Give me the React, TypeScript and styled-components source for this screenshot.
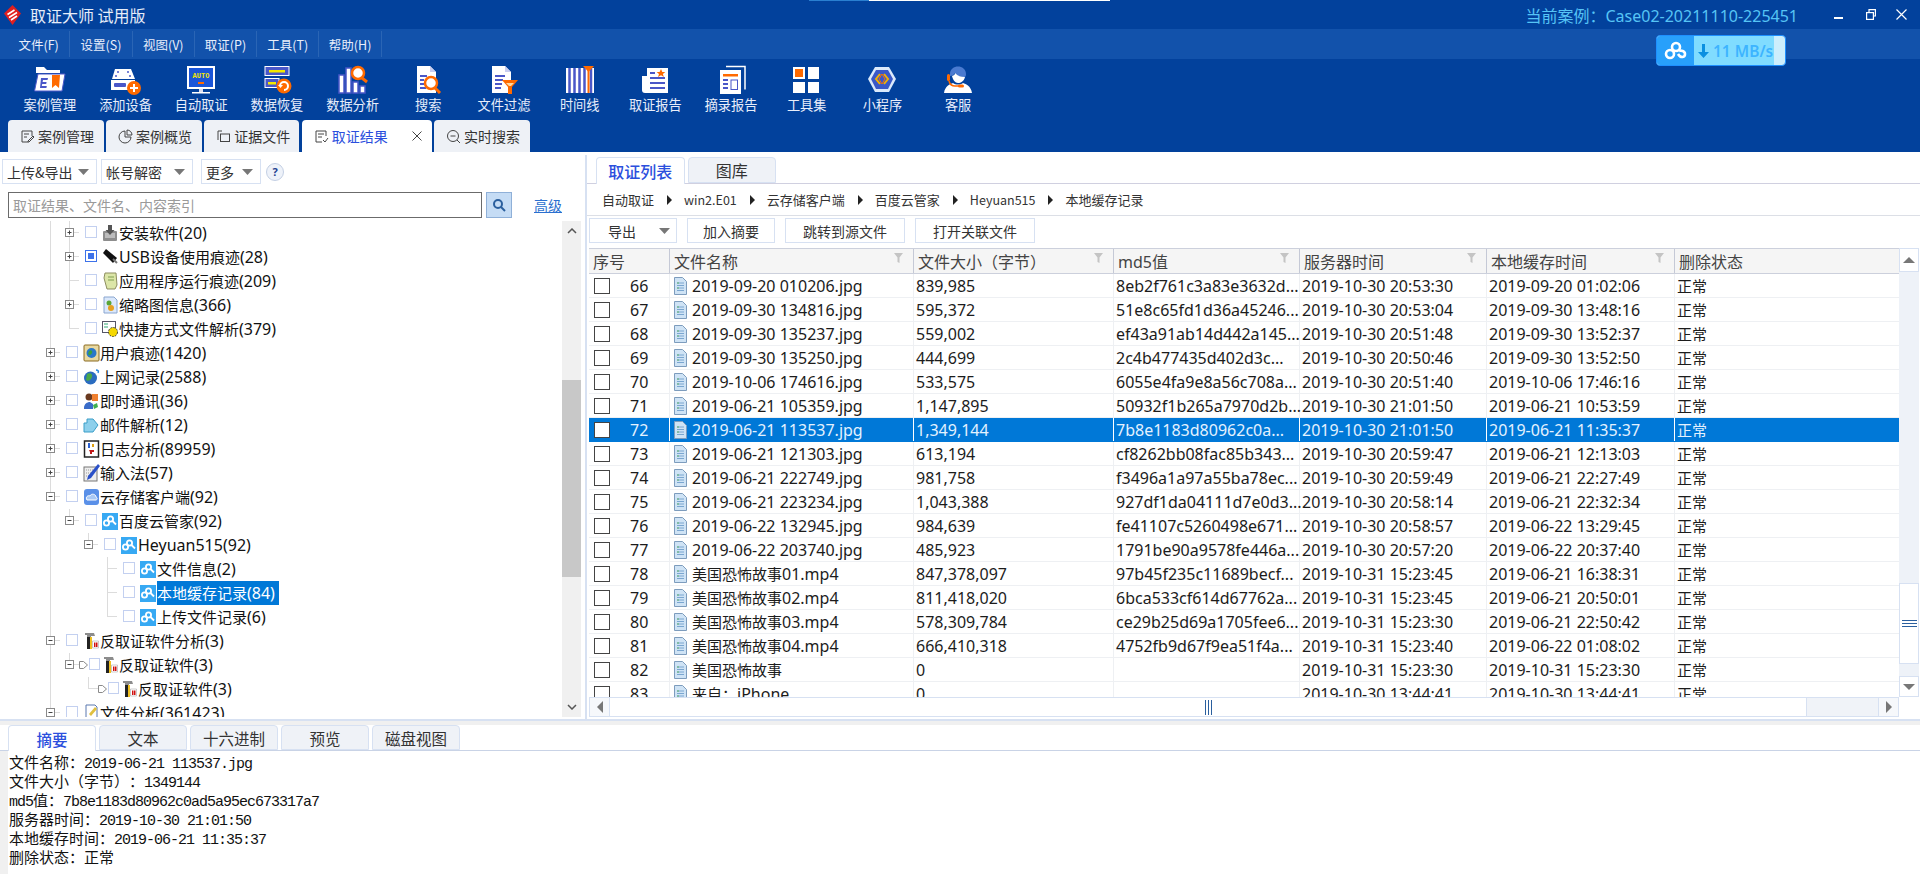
import React from 'react';
import styled, { createGlobalStyle } from 'styled-components';

const FONT = '"Noto Sans", "Noto Sans CJK SC", sans-serif';
const CJK = '"Noto Sans CJK SC", "Noto Sans", sans-serif';
const INDIGO = '#4a57c8';
const ORANGE = '#ff6a00';
const SELECT = '#0078d7';
const PALE = '#d7e1f2';

const Global = createGlobalStyle`
  html, body { margin: 0; padding: 0; background: #fff; }
  body { font-family: ${FONT}; overflow: hidden; text-spacing-trim: space-all; }
  * { box-sizing: border-box; }
`;

const Page = styled.div`
  position: relative;
  width: 1920px;
  height: 874px;
  overflow: hidden;
  display: flex;
  flex-direction: column;
  background: #fff;
`;

/* ---------- header ---------- */
const Header = styled.header`
  background: #02419c;
  flex: none;
`;
const TitleBar = styled.div`
  height: 29px;
  display: flex;
  align-items: center;
  padding-left: 4px;
  color: #e6edf9;
`;
const AppName = styled.span`
  margin-left: 9px;
  font: 16px ${CJK};
  white-space: pre;
`;
const CaseName = styled.span`
  margin-left: auto;
  color: #56c4f5;
  font: 16px ${FONT};
  white-space: pre;
`;
const WindowButtons = styled.div`
  display: flex;
  align-items: center;
  margin-left: 36px;
  margin-right: 13px;
  gap: 20px;
  & > :first-child { margin-right: 3px; }
`;
const TopSliver = styled.div`
  position: absolute;
  left: 809px;
  top: 0;
  width: 301px;
  height: 1px;
  background: linear-gradient(90deg, #2a7fd0 0 60px, #fff 60px);
`;
const MenuBar = styled.nav`
  height: 30px;
  background: #1252ab;
  display: flex;
  align-items: center;
  padding-left: 8px;
`;
const MenuItem = styled.span`
  width: 62.3px;
  height: 26px;
  display: flex;
  align-items: center;
  justify-content: center;
  border-right: 1px solid #2a65b5;
  color: #e8eefb;
  font: 12.5px ${CJK};
`;
const ToolBar = styled.div`
  height: 61px;
  display: flex;
  padding: 5px 0 0 12px;
`;
const ToolItem = styled.div`
  width: 75.7px;
  display: flex;
  flex-direction: column;
  align-items: center;
  color: #e8eefb;
  font: 13.2px/18px ${CJK};
`;
const ToolIcon = styled.div`
  height: 32px;
  display: flex;
  align-items: center;
`;
const TabBar = styled.div`
  height: 32px;
  display: flex;
  gap: 2.4px;
  padding-left: 8px;
`;
const MainTab = styled.div<{ $active?: boolean; $w: number }>`
  width: ${p => p.$w}px;
  display: flex;
  align-items: center;
  padding-left: 12px;
  gap: 3px;
  border-radius: 4px 4px 0 0;
  background: ${p => (p.$active ? '#fff' : '#eef1f6')};
  color: ${p => (p.$active ? '#2b4fdd' : '#333')};
  font: 14px ${CJK};
`;
const TabClose = styled.span`
  margin-left: auto;
  margin-right: 10px;
  display: flex;
`;
const SpeedBadge = styled.div`
  position: absolute;
  left: 1656px;
  top: 35px;
  width: 130px;
  height: 31px;
  display: flex;
  border: 1px solid #1e90ff;
  border-radius: 4px;
  overflow: hidden;
  background: #cdeefc;
`;
const BadgeLogo = styled.div`
  width: 37px;
  background: #28a0fb;
  display: flex;
  align-items: center;
  justify-content: center;
`;
const BadgeSpeed = styled.div`
  width: 80px;
  background: #80dcff;
  display: flex;
  align-items: center;
  padding-left: 4px;
  gap: 4px;
  color: #3db4ff;
  font: 600 15.5px ${FONT};
`;

/* ---------- body ---------- */
const Body = styled.main`
  height: 567px;
  display: flex;
  flex: none;
`;
const LeftPanel = styled.section`
  width: 585px;
  flex: none;
  display: flex;
  flex-direction: column;
  padding-top: 7px;
`;
const ActionRow = styled.div`
  display: flex;
  height: 25px;
  padding-left: 2px;
  align-items: center;
`;
const Select = styled.div<{ $w: number; $gap?: number }>`
  width: ${p => p.$w}px;
  height: 25px;
  margin-right: ${p => p.$gap ?? 0}px;
  padding: 0 7px 0 4px;
  border: 1px solid ${PALE};
  display: flex;
  align-items: center;
  justify-content: space-between;
  color: #333;
  font: 14px ${CJK};
`;
const HelpButton = styled.div`
  width: 18px;
  height: 18px;
  margin-left: 5px;
  border-radius: 50%;
  border: 1px solid #c4d0e4;
  background: #eef2f9;
  display: flex;
  align-items: center;
  justify-content: center;
  color: #23418f;
  font: 700 11px ${FONT};
`;
const SearchRow = styled.div`
  display: flex;
  align-items: center;
  height: 26px;
  margin-top: 8px;
  padding-left: 8px;
`;
const SearchInput = styled.input`
  width: 474px;
  height: 26px;
  padding: 0 4px;
  border: 1px solid #6b6b6b;
  outline: none;
  font: 14px ${CJK};
  &::placeholder { color: #9a9a9a; opacity: 1; }
`;
const SearchButton = styled.div`
  width: 26px;
  height: 26px;
  margin-left: 4px;
  background: #c5dcf5;
  border: 1px solid #8fb0d8;
  display: flex;
  align-items: center;
  justify-content: center;
`;
const AdvancedLink = styled.a`
  margin-left: 22px;
  color: #2b6fcf;
  text-decoration: underline;
  font: 14px ${CJK};
`;
const TreeWrap = styled.div`
  margin-top: 3px;
  height: 496px;
  display: flex;
`;
const Tree = styled.div`
  width: 562px;
  overflow: hidden;
`;
const TreeRow = styled.div`
  height: 24px;
  display: flex;
  align-items: center;
  padding-left: 41px;
`;
const Guide = styled.div<{ $line?: boolean }>`
  width: 19px;
  height: 24px;
  flex: none;
  background: ${p => (p.$line ? 'linear-gradient(#dcdcdc, #dcdcdc) 9px 0 / 1px 100% no-repeat' : 'none')};
`;
const CheckSlot = styled.div<{ $arrow?: boolean }>`
  width: 23px;
  flex: none;
  display: flex;
  align-items: center;
  padding-left: ${p => (p.$arrow ? 0 : 6)}px;
`;
const TreeCheck = styled.div<{ $on?: boolean; $small?: boolean }>`
  width: ${p => (p.$small ? 11 : 12)}px;
  height: 12px;
  margin-top: -2px;
  flex: none;
  border: 1px solid ${p => (p.$on ? '#3d72ea' : '#c3d0f0')};
  background: #fff;
  display: flex;
  align-items: center;
  justify-content: center;
  &::after {
    content: '';
    display: ${p => (p.$on ? 'block' : 'none')};
    width: 6px;
    height: 6px;
    background: #3d72ea;
  }
`;
const TreeIconBox = styled.div`
  width: 17px;
  height: 18px;
  flex: none;
  display: flex;
`;
const TreeLabel = styled.span<{ $selected?: boolean }>`
  height: 24px;
  line-height: 24px;
  padding-right: 4px;
  white-space: nowrap;
  font-size: 16px;
  color: ${p => (p.$selected ? '#fff' : '#111')};
  background: ${p => (p.$selected ? SELECT : 'transparent')};
`;
const Han = styled.span`
  font-size: 15px;
  font-family: ${CJK};
`;
const ScrollTrack = styled.div`
  width: 19px;
  background: #f0f0f0;
  display: flex;
  flex-direction: column;
`;
const ScrollEnd = styled.div`
  height: 20px;
  flex: none;
  display: flex;
  align-items: center;
  justify-content: center;
`;
const ScrollGap = styled.div<{ $h?: number }>`
  ${p => (p.$h ? `height: ${p.$h}px; flex: none;` : 'flex: 1;')}
`;
const ScrollThumb = styled.div`
  height: 197px;
  flex: none;
  background: #c8c8c8;
`;

/* ---------- right panel ---------- */
const RightPanel = styled.section`
  flex: 1;
  margin-top: 3px;
  border-left: 2px solid ${PALE};
  display: flex;
  flex-direction: column;
  min-width: 0;
`;
const RightTabs = styled.div`
  height: 27px;
  margin-top: 2px;
  display: flex;
  gap: 3px;
  padding-left: 9px;
  border-bottom: 1px solid #d0d0e0;
`;
const RightTab = styled.div<{ $active?: boolean }>`
  width: 88.5px;
  height: ${p => (p.$active ? 27 : 26)}px;
  display: flex;
  align-items: center;
  justify-content: center;
  border: 1px solid ${PALE};
  border-bottom: ${p => (p.$active ? 'none' : undefined)};
  border-radius: 4px 4px 0 0;
  background: ${p => (p.$active ? '#fff' : '#eff2f7')};
  color: ${p => (p.$active ? '#2b4fdd' : '#333')};
  font: ${p => (p.$active ? 500 : 400)} 16px ${CJK};
  z-index: 1;
`;
const Breadcrumb = styled.div`
  height: 32px;
  display: flex;
  align-items: center;
  padding-left: 15px;
  border-bottom: 1px solid #dcdfe6;
  color: #333;
  font: 13px ${CJK};
`;
const Crumb = styled.span<{ $latin?: boolean }>`
  white-space: nowrap;
  font-size: ${p => (p.$latin ? 12.5 : 13)}px;
`;
const CrumbArrow = styled.span`
  width: 0;
  height: 0;
  margin: 0 12px 0 13px;
  border-left: 5px solid #222;
  border-top: 5px solid transparent;
  border-bottom: 5px solid transparent;
`;
const ListActions = styled.div`
  height: 32px;
  padding: 2px 0 0 2px;
  display: flex;
  gap: 10px;
`;
const ActionButton = styled.div<{ $w: number }>`
  width: ${p => p.$w}px;
  height: 25px;
  border: 1px solid ${PALE};
  display: flex;
  align-items: center;
  justify-content: center;
  color: #333;
  font: 14px ${CJK};
`;
const ExportButton = styled(ActionButton)`
  justify-content: space-between;
  padding: 0 6px 0 18px;
`;
const TableWrap = styled.div`
  height: 449px;
  margin-left: 2px;
  display: flex;
`;
const TableMain = styled.div`
  width: 1310px;
  overflow: hidden;
`;
const COLS = '81px 244px 200px 186px 187px 188px 224px';
const HeadRow = styled.div`
  height: 26px;
  display: grid;
  grid-template-columns: ${COLS};
  background: #f5f5f5;
  border-top: 1px solid #ccd0dc;
  border-bottom: 1px solid #ccd0dc;
`;
const HeadCell = styled.div`
  display: flex;
  align-items: center;
  justify-content: space-between;
  padding: 0 10px 0 4px;
  border-right: 1px solid #c5c9d6;
  color: #444;
  font-size: 16px;
  &:last-child { border-right: none; }
`;
const HeadFilter = styled.span`
  display: flex;
  margin-top: -6px;
`;
const Row = styled.div<{ $selected?: boolean }>`
  height: 24px;
  display: grid;
  grid-template-columns: ${COLS};
  background: ${p => (p.$selected ? SELECT : '#fff')};
  color: ${p => (p.$selected ? '#e4f2ff' : '#1c1c1c')};
  border-bottom: 1px solid ${p => (p.$selected ? SELECT : '#eef0f3')};
  font-size: 16px;
`;
const Cell = styled.div<{ $selected?: boolean }>`
  display: flex;
  align-items: center;
  padding-left: 2px;
  white-space: nowrap;
  border-right: 1px solid ${p => (p.$selected ? '#fff' : '#eef0f3')};
  &:last-child { border-right: none; }
`;
const IndexCell = styled(Cell)`
  padding-left: 5px;
`;
const NameCell = styled(Cell)`
  padding-left: 4px;
  gap: 5px;
`;
const RowCheck = styled.div`
  width: 16px;
  height: 16px;
  margin-right: 20px;
  flex: none;
  border: 1px solid #444;
  background: #fff;
`;
const VScroll = styled.div`
  width: 20px;
  background: #eef2f8;
  display: flex;
  flex-direction: column;
`;
const VEnd = styled.div<{ $h: number }>`
  height: ${p => p.$h}px;
  flex: none;
  background: #fff;
  border: 1px solid ${PALE};
  display: flex;
  align-items: center;
  justify-content: center;
`;
const VThumb = styled.div`
  height: 81px;
  flex: none;
  background: #fff;
  border: 1px solid ${PALE};
  display: flex;
  align-items: center;
  justify-content: center;
`;
const HScroll = styled.div`
  width: 1310px;
  height: 20px;
  margin-left: 2px;
  display: flex;
  background: #f0f3f8;
  border-top: 1px solid ${PALE};
  border-bottom: 1px solid ${PALE};
`;
const HEnd = styled.div`
  width: 21px;
  flex: none;
  background: #f6f8fb;
  border-left: 1px solid ${PALE};
  border-right: 1px solid ${PALE};
  display: flex;
  align-items: center;
  justify-content: center;
`;
const HThumb = styled.div`
  width: 1197px;
  flex: none;
  background: #fff;
  border-right: 1px solid ${PALE};
  display: flex;
  align-items: center;
  justify-content: center;
`;

/* ---------- bottom ---------- */
const Bottom = styled.section`
  flex: 1;
  display: flex;
  flex-direction: column;
  border-top: 2px solid ${PALE};
  background: #f0f0f0;
`;
const BottomTabs = styled.div`
  margin-top: 4px;
  height: 26px;
  padding-left: 8px;
  display: flex;
  gap: 3px;
  background: #fff;
  border-bottom: 1px solid #c9d3e6;
`;
const BottomTab = styled.div<{ $active?: boolean }>`
  width: 88px;
  height: ${p => (p.$active ? 26 : 25)}px;
  border: 1px solid ${PALE};
  border-bottom: ${p => (p.$active ? 'none' : undefined)};
  border-radius: 4px 4px 0 0;
  background: ${p => (p.$active ? '#fff' : '#eff2f7')};
  color: ${p => (p.$active ? '#2b4fdd' : '#333')};
  display: flex;
  align-items: center;
  justify-content: center;
  font: ${p => (p.$active ? 500 : 400)} 15.5px ${CJK};
`;
const Summary = styled.div`
  flex: 1;
  margin-left: 8px;
  padding: 1px 0 0 1px;
  background: #fff;
`;
const SummaryLine = styled.div`
  height: 19px;
  line-height: 19px;
  white-space: pre;
  color: #111;
`;
const SumCjk = styled.span`
  font: 15px/19px ${CJK};
`;
const SumMono = styled.span`
  font: 15px/19px "Liberation Mono", monospace;
  letter-spacing: -1px;
`;

/* ---------- small drawings ---------- */
const mix = (s: string) =>
  s.split(/([\u3000-\u9fff\uff00-\uffef]+)/).map((p, i) => (i % 2 ? <Han key={i}>{p}</Han> : p));

const Caret = () => (
  <svg width="11" height="6" viewBox="0 0 11 6"><path d="M0 0h11L5.5 6z" fill="#777" /></svg>
);
const Funnel = () => (
  <svg width="9" height="10" viewBox="0 0 9 10"><path d="M0 0h9L5.5 4.5V10L3.5 9V4.5z" fill="#c4c4c4" /></svg>
);
const Connector = ({ up, down, box }: { up?: boolean; down?: boolean; box?: '+' | '-' }) => (
  <svg width="19" height="24" viewBox="0 0 19 24" style={{ flex: 'none' }}>
    {up && <path d="M9.5 0V12" stroke="#dcdcdc" />}
    {down && <path d="M9.5 12V24" stroke="#dcdcdc" />}
    <path d="M9.5 11.5H19" stroke="#dcdcdc" />
    {box && <rect x="5.5" y="7.5" width="8" height="8" fill="#fff" stroke="#8a8a8a" />}
    {box && <path d="M7.5 11.5h4" stroke="#444" />}
    {box === '+' && <path d="M9.5 9.5v4" stroke="#444" />}
  </svg>
);
const Small = ({ children }: { children: React.ReactNode }) => (
  <svg width="17" height="18" viewBox="0 0 17 18">{children}</svg>
);
const FileIcon = () => (
  <svg width="13" height="18" viewBox="0 0 13 18" style={{ flex: 'none' }}>
    <path d="M.5.5h8l4 4v13H.5z" fill="#cfe3f5" stroke="#7d9cbd" />
    <path d="M3 6h7M3 8.5h7M3 11h7M3 13.5h7" stroke="#7aa6d0" />
    <path d="M3 6h2M3 11h2" stroke="#5cb26a" />
  </svg>
);
const BaiduMark = () => (
  <svg width="16" height="18" viewBox="0 0 16 18">
    <rect width="16" height="17" y="1" fill="#37a9f3" />
    <circle cx="4.5" cy="11" r="2.6" fill="none" stroke="#fff" strokeWidth="1.8" />
    <circle cx="8.5" cy="7" r="2.6" fill="none" stroke="#fff" strokeWidth="1.8" />
    <path d="M10.5 9l3.5 3.5" stroke="#fff" strokeWidth="1.8" />
  </svg>
);
const Hammer = () => (
  <Small>
    <path d="M2 1h9l1 3H8v1H4V3H2z" fill="#8c8c8c" />
    <path d="M4 5h3v12H4z" fill="#222" />
    <path d="M7 5h2v12H7z" fill="#f0c020" />
    <path d="M9.500 9h6v7h-6z" fill="#fff" stroke="#999" strokeWidth=".5" />
    <path d="M11 10.500h1.500V15H11zM13 10.500h1.500V15H13z" fill="#d01010" />
  </Small>
);
const treeIcons: Record<string, React.ReactNode> = {
  install: (
    <Small>
      <rect x="1" y="7" width="14" height="10" rx="1" fill="#8d8d8d" />
      <rect x="3" y="9" width="10" height="5" fill="#bcbcbc" />
      <path d="M6 1h4v5h2.5L8 11 3.500 6H6z" fill="#555" />
    </Small>
  ),
  usb: (
    <Small>
      <path d="M4 1l11 9-4 5L1 5z" fill="#111" />
      <path d="M11 11l4 4" stroke="#777" strokeWidth="2" />
    </Small>
  ),
  app: (
    <Small>
      <path d="M3 1h11l1 12-2 4H5L2 6z" fill="#dce6a8" stroke="#8d8d60" />
      <path d="M6 5h6M6 8h6" stroke="#7e9e50" />
    </Small>
  ),
  thumb: (
    <Small>
      <path d="M2 1h10l3 3v13H2z" fill="#dbe8fb" stroke="#8aa6d0" />
      <circle cx="7" cy="7" r="2.500" fill="#5aa637" />
      <circle cx="9" cy="12" r="3" fill="#e6a020" />
    </Small>
  ),
  shortcut: (
    <Small>
      <rect x="0.500" y="1.500" width="13" height="11" fill="#fff" stroke="#556" />
      <path d="M2 4h4M2 7h4" stroke="#3a7" />
      <circle cx="11" cy="12" r="4.500" fill="#f5d800" stroke="#443" strokeDasharray="2 1" />
    </Small>
  ),
  user: (
    <Small>
      <rect x="1" y="1" width="15" height="16" rx="1" fill="#e8d8a0" stroke="#8a6a20" />
      <circle cx="8.500" cy="9" r="5" fill="#2a78c8" />
      <path d="M6 7c2-2 4 0 3 2s-3 3-4 1z" fill="#3aa040" />
    </Small>
  ),
  web: (
    <Small>
      <circle cx="7.500" cy="10" r="6.500" fill="#2a6cc0" />
      <path d="M4 6c3-2 6 0 5 3s-4 5-6 3z" fill="#4aa848" />
      <path d="M13 2c2 0 3 1 2 3" stroke="#2a88e0" strokeWidth="1.500" fill="none" />
    </Small>
  ),
  im: (
    <Small>
      <circle cx="6" cy="5" r="3.500" fill="#6a3a20" />
      <path d="M9 2h6v7H9z" fill="#f08030" />
      <path d="M1 16c0-4 3-6 6-6l3 2v5H1z" fill="#3a6cc8" />
      <path d="M10 13l4-2 1 4-4 2z" fill="#40b050" />
    </Small>
  ),
  mail: (
    <Small>
      <path d="M1 7h3V3h6l5 6-5 7H1z" fill="#8ed0ec" stroke="#3a9ec8" />
    </Small>
  ),
  log: (
    <Small>
      <rect x="1.500" y="1" width="14" height="16" fill="#fff" stroke="#222" strokeWidth="1.500" />
      <path d="M5 3h2v5H5z" fill="#2a60d0" />
      <path d="M9 4h2v3H9z" fill="#e0a010" />
      <path d="M6 10h5v2H9v2H7v-2z" fill="#c01818" />
    </Small>
  ),
  input: (
    <Small>
      <rect x="1" y="3" width="13" height="14" fill="#eee" stroke="#777" />
      <path d="M3 6h9M3 9h7M3 12h5" stroke="#999" strokeDasharray="1 1" />
      <path d="M15 0l2 2-9 12-4 2 1-4z" fill="#2a50c8" />
    </Small>
  ),
  cloud: (
    <Small>
      <rect x="1" y="1" width="15" height="16" rx="3" fill="#5a90e8" />
      <path d="M4 12c-2-3 1-5 3-4 1-3 6-2 6 1 2 1 1 3 0 3z" fill="#a8c8f4" stroke="#fff" />
    </Small>
  ),
  file: (
    <Small>
      <path d="M3 1h9l2 2v14H3z" fill="#fff" stroke="#5a78b0" />
      <path d="M6 10l6-7 2 2-6 7z" fill="#e0c040" />
    </Small>
  ),
  baidu: <BaiduMark />,
  hammer: <Hammer />
};

const ToolSvg = ({ children }: { children: React.ReactNode }) => (
  <svg width="34" height="30" viewBox="0 0 34 30">{children}</svg>
);
const toolIcons: React.ReactNode[] = [
  <ToolSvg key="1">
    <path d="M3 2h8l3 3h13v3H3z" fill="#fff" />
    <path d="M1.500 26L5 9h27l-3 17z" fill="#fff" stroke={INDIGO} />
    <path d="M8 13h7l-.5 2H10l-.4 2h4l-.4 2h-4l-.4 2h5l-.4 2H7z" fill={INDIGO} />
    <path d="M19 10h8l-1 13-3.500-3-3.500 3z" fill={ORANGE} />
  </ToolSvg>,
  <ToolSvg key="2">
    <path d="M6 4h16l4 10H3z" fill="#fff" />
    <circle cx="9" cy="7" r="1" fill={INDIGO} />
    <circle cx="19" cy="7" r="1" fill={INDIGO} />
    <circle cx="7" cy="11" r="1" fill={INDIGO} />
    <circle cx="21" cy="11" r="1" fill={INDIGO} />
    <rect x="2" y="15" width="24" height="10" fill="#fff" />
    <rect x="5" y="18" width="12" height="4" rx="1" fill={INDIGO} />
    <circle cx="25" cy="23" r="7" fill={ORANGE} />
    <path d="M25 19v8M21 23h8" stroke="#fff" strokeWidth="2" />
  </ToolSvg>,
  <ToolSvg key="3">
    <rect x="3" y="1" width="28" height="23" fill="#fff" />
    <rect x="5" y="3" width="24" height="19" fill="#1a55d8" />
    <text x="17" y="12.500" textAnchor="middle" fontSize="7" fontWeight="700" fill="#f5e800" fontFamily="Liberation Mono, monospace">AUTO</text>
    <rect x="14" y="17" width="6" height="2" fill={ORANGE} />
    <rect x="15" y="24" width="4" height="3" fill="#dde" />
    <rect x="8" y="27" width="18" height="1.500" fill="#fff" />
  </ToolSvg>,
  <ToolSvg key="4">
    <rect x="5" y="1.500" width="24" height="9" fill={INDIGO} stroke="#fff" />
    <rect x="9" y="5" width="16" height="2.500" fill="#f5e800" />
    <rect x="5" y="13.500" width="14" height="9" fill={INDIGO} stroke="#fff" />
    <rect x="8" y="17" width="8" height="2.500" fill="#f5e800" />
    <circle cx="24" cy="21" r="7.500" fill={ORANGE} />
    <path d="M20 21a4 4 0 1 1 4 4" fill="none" stroke="#fff" strokeWidth="2" />
    <path d="M18 20h5l-2.500 3z" fill="#fff" />
  </ToolSvg>,
  <ToolSvg key="5">
    <rect x="3" y="10" width="5" height="18" fill="#fff" stroke={INDIGO} strokeWidth="1.500" />
    <rect x="10" y="3" width="5" height="25" fill="#fff" stroke={INDIGO} strokeWidth="1.500" />
    <rect x="17" y="17" width="5" height="11" fill="#fff" stroke={INDIGO} strokeWidth="1.500" />
    <rect x="24" y="21" width="5" height="7" fill="#fff" stroke={INDIGO} strokeWidth="1.500" />
    <circle cx="22" cy="8" r="6" fill="#fff" stroke={ORANGE} strokeWidth="2.500" />
    <path d="M26 13l5 4" stroke={ORANGE} strokeWidth="3" />
  </ToolSvg>,
  <ToolSvg key="6">
    <path d="M6 1h13l6 6v21H6z" fill="#fff" />
    <path d="M19 1l6 6h-6z" fill="#c9cdf0" />
    <path d="M9 11h7M9 15h4M9 19h4M9 23h6" stroke={INDIGO} strokeWidth="2" />
    <circle cx="20" cy="18" r="6" fill="#fff" stroke={ORANGE} strokeWidth="2.500" />
    <path d="M24 23l5 5" stroke={ORANGE} strokeWidth="3" />
  </ToolSvg>,
  <ToolSvg key="7">
    <path d="M5 1h13l6 6v21H5z" fill="#fff" />
    <path d="M18 1l6 6h-6z" fill="#c9cdf0" />
    <path d="M8 11h10M8 15h8M8 19h7M8 23h6" stroke={INDIGO} strokeWidth="2" />
    <path d="M15 15h16l-6 7v7h-4v-7z" fill={ORANGE} />
    <path d="M19 18h8l-3 3h-2z" fill="#ffd9a0" />
  </ToolSvg>,
  <ToolSvg key="8">
    <rect x="3" y="3" width="28" height="25" fill="#fff" />
    <path d="M6.500 3v25M11.500 3v25M16.500 3v25M21.500 3v25M28 3v25" stroke={INDIGO} strokeWidth="2.500" />
    <path d="M20 1h11l-5.500 6z" fill={ORANGE} />
    <rect x="24.500" y="5" width="2" height="23" fill={ORANGE} />
  </ToolSvg>,
  <ToolSvg key="9">
    <path d="M4 11h5v17H7c-2 0-3-1-3-3z" fill="#fff" />
    <rect x="9" y="3" width="21" height="25" fill="#fff" />
    <path d="M23 4l1.300 3h3l-2.400 2 1 3-2.900-1.800L20 12l1-3-2.400-2h3z" fill={ORANGE} />
    <path d="M12 8h5M12 13h15M12 18h15M12 23h15" stroke={INDIGO} strokeWidth="2" />
  </ToolSvg>,
  <ToolSvg key="10">
    <path d="M12 1.500h19v23" fill="none" stroke="#fff" strokeWidth="1.500" />
    <rect x="6" y="5" width="21" height="24" fill="#fff" />
    <rect x="9" y="9" width="15" height="2.500" fill={ORANGE} />
    <path d="M9 15h5M9 19h5M9 23h5" stroke={INDIGO} strokeWidth="2" />
    <rect x="17" y="15" width="6.500" height="9.500" fill="#fff" stroke={INDIGO} />
  </ToolSvg>,
  <ToolSvg key="11">
    <rect x="3" y="2" width="12" height="12" fill="#fff" />
    <rect x="5" y="4" width="8" height="8" fill={ORANGE} />
    <rect x="18" y="2" width="11" height="12" fill="#fff" />
    <rect x="3" y="17" width="12" height="11" fill="#fff" />
    <rect x="18" y="17" width="11" height="11" fill="#fff" />
  </ToolSvg>,
  <ToolSvg key="12">
    <path d="M10 2h14l7 12-7 13H10L3 14z" fill="#dbe9fb" />
    <path d="M11 5h12l5 9-5 10H11L6 14z" fill="#3a58c8" />
    <path d="M15 9l-4 5 4 5M19 9l4 5-4 5" fill="none" stroke="#f5b000" strokeWidth="2" />
    <path d="M17 9l-3 5 3 5 3-5z" fill="none" stroke={ORANGE} />
  </ToolSvg>,
  <ToolSvg key="13">
    <path d="M9 9c0-10 16-10 16 0 0 1 0 2-1 3-5 0-8-1-10-4-1 2-3 3-5 3z" fill="#4a7ad0" />
    <path d="M11 11c3-1 3-2 3-3 3 3 6 4 10 4-1 4-4 6-7 6-3 0-5-3-6-7z" fill="#fff" />
    <path d="M3 28c1-7 6-9 9-10 3 2 7 2 10 0 3 1 8 3 9 10z" fill="#fff" />
    <rect x="6" y="9" width="3" height="7" rx="1.500" fill={ORANGE} />
    <path d="M8 16c1 4 3 5 6 5h6" fill="none" stroke={ORANGE} strokeWidth="1.500" />
    <rect x="17" y="19.500" width="6" height="3" rx="1.500" fill={ORANGE} />
  </ToolSvg>
];

/* ---------- data ---------- */
const menus = ['文件(F)', '设置(S)', '视图(V)', '取证(P)', '工具(T)', '帮助(H)'];
const tools = ['案例管理', '添加设备', '自动取证', '数据恢复', '数据分析', '搜索', '文件过滤', '时间线', '取证报告', '摘录报告', '工具集', '小程序', '客服'];
const tabIcon = (i: number) => {
  const s = { fill: 'none', stroke: '#444', strokeWidth: 1 };
  const shapes = [
    <g key="a" {...s}><path d="M12 7V2H2v11h6" /><path d="M4 5h5M4 8h3" /><path d="M8 12l5-5 1 1-5 5H8z" /></g>,
    <g key="b" {...s}><path d="M7 2a6 6 0 1 0 6 6H7z" /><path d="M9 1a5 5 0 0 1 5 5H9z" /></g>,
    <g key="c" {...s}><path d="M2 2v9" /><path d="M2 2h4" /><rect x="4.500" y="5" width="9" height="7.500" /></g>,
    <g key="d" {...s}><path d="M12 7V2H2v11h6" /><path d="M4 5h6M4 8h4" /><path d="M9 11l2 2 3-4" /></g>,
    <g key="e" {...s}><circle cx="7" cy="7" r="5.500" /><path d="M4.500 7h5M11 11l3 3" /></g>
  ];
  return <svg width="15" height="15" viewBox="0 0 15 15">{shapes[i]}</svg>;
};
const mainTabs = [
  { t: '案例管理', w: 95.5 },
  { t: '案例概览', w: 96 },
  { t: '证据文件', w: 95 },
  { t: '取证结果', w: 130, active: true },
  { t: '实时搜索', w: 96 }
];

type Node = {
  level: number; label: string; icon: string;
  up?: boolean; down?: boolean; box?: '+' | '-';
  on?: boolean; selected?: boolean; arrow?: boolean;
};
const nodes: Node[] = [
  { level: 1, label: '安装软件(20)', icon: 'install', up: true, down: true, box: '+' },
  { level: 1, label: 'USB设备使用痕迹(28)', icon: 'usb', up: true, down: true, box: '+', on: true },
  { level: 1, label: '应用程序运行痕迹(209)', icon: 'app', up: true, down: true },
  { level: 1, label: '缩略图信息(366)', icon: 'thumb', up: true, down: true, box: '+' },
  { level: 1, label: '快捷方式文件解析(379)', icon: 'shortcut', up: true },
  { level: 0, label: '用户痕迹(1420)', icon: 'user', up: true, down: true, box: '+' },
  { level: 0, label: '上网记录(2588)', icon: 'web', up: true, down: true, box: '+' },
  { level: 0, label: '即时通讯(36)', icon: 'im', up: true, down: true, box: '+' },
  { level: 0, label: '邮件解析(12)', icon: 'mail', up: true, down: true, box: '+' },
  { level: 0, label: '日志分析(89959)', icon: 'log', up: true, down: true, box: '+' },
  { level: 0, label: '输入法(57)', icon: 'input', up: true, down: true, box: '+' },
  { level: 0, label: '云存储客户端(92)', icon: 'cloud', up: true, down: true, box: '-' },
  { level: 1, label: '百度云管家(92)', icon: 'baidu', up: true, box: '-' },
  { level: 2, label: 'Heyuan515(92)', icon: 'baidu', up: true, box: '-' },
  { level: 3, label: '文件信息(2)', icon: 'baidu', up: true, down: true },
  { level: 3, label: '本地缓存记录(84)', icon: 'baidu', up: true, down: true, selected: true },
  { level: 3, label: '上传文件记录(6)', icon: 'baidu', up: true },
  { level: 0, label: '反取证软件分析(3)', icon: 'hammer', up: true, down: true, box: '-' },
  { level: 1, label: '反取证软件(3)', icon: 'hammer', up: true, box: '-', arrow: true },
  { level: 2, label: '反取证软件(3)', icon: 'hammer', up: true, arrow: true },
  { level: 0, label: '文件分析(361423)', icon: 'file', up: true, down: true, box: '-' }
];

const columns = ['序号', '文件名称', '文件大小（字节）', 'md5值', '服务器时间', '本地缓存时间', '删除状态'];
const D = '2019-10-30 ';
const E = '2019-10-31 ';
const rows: [number, string, string, string, string, string][] = [
  [66, '2019-09-20 010206.jpg', '839,985', '8eb2f761c3a83e3632d...', D + '20:53:30', '2019-09-20 01:02:06'],
  [67, '2019-09-30 134816.jpg', '595,372', '51e8c65fd1d36a45246...', D + '20:53:04', '2019-09-30 13:48:16'],
  [68, '2019-09-30 135237.jpg', '559,002', 'ef43a91ab14d442a145...', D + '20:51:48', '2019-09-30 13:52:37'],
  [69, '2019-09-30 135250.jpg', '444,699', '2c4b477435d402d3c...', D + '20:50:46', '2019-09-30 13:52:50'],
  [70, '2019-10-06 174616.jpg', '533,575', '6055e4fa9e8a56c708a...', D + '20:51:40', '2019-10-06 17:46:16'],
  [71, '2019-06-21 105359.jpg', '1,147,895', '50932f1b265a7970d2b...', D + '21:01:50', '2019-06-21 10:53:59'],
  [72, '2019-06-21 113537.jpg', '1,349,144', '7b8e1183d80962c0a...', D + '21:01:50', '2019-06-21 11:35:37'],
  [73, '2019-06-21 121303.jpg', '613,194', 'cf8262bb08fac85b343...', D + '20:59:47', '2019-06-21 12:13:03'],
  [74, '2019-06-21 222749.jpg', '981,758', 'f3496a1a97a55ba78ec...', D + '20:59:49', '2019-06-21 22:27:49'],
  [75, '2019-06-21 223234.jpg', '1,043,388', '927df1da04111d7e0d3...', D + '20:58:14', '2019-06-21 22:32:34'],
  [76, '2019-06-22 132945.jpg', '984,639', 'fe41107c5260498e671...', D + '20:58:57', '2019-06-22 13:29:45'],
  [77, '2019-06-22 203740.jpg', '485,923', '1791be90a9578fe446a...', D + '20:57:20', '2019-06-22 20:37:40'],
  [78, '美国恐怖故事01.mp4', '847,378,097', '97b45f235c11689becf...', E + '15:23:45', '2019-06-21 16:38:31'],
  [79, '美国恐怖故事02.mp4', '811,418,020', '6bca533cf614d67762a...', E + '15:23:45', '2019-06-21 20:50:01'],
  [80, '美国恐怖故事03.mp4', '578,309,784', 'ce29b25d69a1705fee6...', E + '15:23:30', '2019-06-21 22:50:42'],
  [81, '美国恐怖故事04.mp4', '666,410,318', '4752fb9d67f9ea51f4a...', E + '15:23:40', '2019-06-22 01:08:02'],
  [82, '美国恐怖故事', '0', '', E + '15:23:30', E + '15:23:30'],
  [83, '来自：iPhone', '0', '', D + '13:44:41', D + '13:44:41']
];
const crumbs = ['自动取证', 'win2.E01', '云存储客户端', '百度云管家', 'Heyuan515', '本地缓存记录'];

export default function App() {
  return (
    <Page>
      <Global />
      <Header>
        <TitleBar>
          <svg width="17" height="20" viewBox="0 0 17 20">
            <path d="M8.500 0L17 8.500 8.500 20 0 8.500z" fill="#e01f1f" />
            <path d="M3.500 9.500l7-4.500M5 12.500l8-5M7 15l6-4" stroke="#fff" strokeWidth="1.600" />
          </svg>
          <AppName>取证大师 试用版</AppName>
          <CaseName>当前案例：Case02-20211110-225451</CaseName>
          <WindowButtons>
            <svg width="9" height="10" viewBox="0 0 9 10"><rect y="7" width="9" height="2" fill="#fff" /></svg>
            <svg width="10" height="11" viewBox="0 0 10 11" fill="none" stroke="#fff" strokeWidth="1.200">
              <rect x=".6" y="3.600" width="6.800" height="6.800" />
              <path d="M3 3.500V.6h6.400v6.400H7.500" />
            </svg>
            <svg width="11" height="11" viewBox="0 0 11 11" stroke="#fff" strokeWidth="1.200"><path d="M.5.500l10 10M10.500.500l-10 10" /></svg>
          </WindowButtons>
        </TitleBar>
        <MenuBar>{menus.map(m => <MenuItem key={m}>{m}</MenuItem>)}</MenuBar>
        <ToolBar>
          {tools.map((t, i) => (
            <ToolItem key={t}>
              <ToolIcon>{toolIcons[i]}</ToolIcon>
              {t}
            </ToolItem>
          ))}
        </ToolBar>
        <TabBar>
          {mainTabs.map((tab, i) => (
            <MainTab key={tab.t} $w={tab.w} $active={tab.active}>
              {tabIcon(i)}
              {tab.t}
              {tab.active && (
                <TabClose>
                  <svg width="10" height="10" viewBox="0 0 10 10" stroke="#444"><path d="M.5.500l9 9M9.500.500l-9 9" /></svg>
                </TabClose>
              )}
            </MainTab>
          ))}
        </TabBar>
      </Header>
      <TopSliver />
      <SpeedBadge>
        <BadgeLogo>
          <svg width="24" height="20" viewBox="0 0 24 20" fill="none" stroke="#fff" strokeWidth="2.600">
            <circle cx="12" cy="6" r="4" />
            <circle cx="6" cy="13" r="4" />
            <path d="M15 10c2-1 6 0 6 3s-4 5-7 0" />
          </svg>
        </BadgeLogo>
        <BadgeSpeed>
          <svg width="11" height="14" viewBox="0 0 11 14" fill="#0a90e0"><path d="M4 0h3v8h4l-5.500 6L0 8h4z" /></svg>
          11 MB/s
        </BadgeSpeed>
      </SpeedBadge>

      <Body>
        <LeftPanel>
          <ActionRow>
            <Select $w={95} $gap={4}>上传&amp;导出<Caret /></Select>
            <Select $w={92} $gap={8}>帐号解密<Caret /></Select>
            <Select $w={60}>更多<Caret /></Select>
            <HelpButton>?</HelpButton>
          </ActionRow>
          <SearchRow>
            <SearchInput placeholder="取证结果、文件名、内容索引" readOnly />
            <SearchButton>
              <svg width="14" height="14" viewBox="0 0 14 14" fill="none" stroke="#2a5f9e" strokeWidth="2">
                <circle cx="6" cy="6" r="4" /><path d="M9 9l4 4" />
              </svg>
            </SearchButton>
            <AdvancedLink>高级</AdvancedLink>
          </SearchRow>
          <TreeWrap>
            <Tree>
              {nodes.map((n, i) => (
                <TreeRow key={i}>
                  {Array.from({ length: n.level }).map((_, g) => <Guide key={g} $line={g === 0} />)}
                  <Connector up={n.up} down={n.down} box={n.box} />
                  <CheckSlot $arrow={n.arrow}>
                    {n.arrow && (
                      <svg width="10" height="10" viewBox="0 0 10 10" fill="#fff" stroke="#8a8a8a"><path d="M.5 1.500h4l4 3.500-4 3.500h-4z" /></svg>
                    )}
                    <TreeCheck $on={n.on} $small={n.arrow} />
                  </CheckSlot>
                  <TreeIconBox>{treeIcons[n.icon]}</TreeIconBox>
                  <TreeLabel $selected={n.selected}>{mix(n.label)}</TreeLabel>
                </TreeRow>
              ))}
            </Tree>
            <ScrollTrack>
              <ScrollEnd>
                <svg width="10" height="6" viewBox="0 0 10 6" fill="none" stroke="#555" strokeWidth="1.500"><path d="M1 5l4-4 4 4" /></svg>
              </ScrollEnd>
              <ScrollGap $h={139} />
              <ScrollThumb />
              <ScrollGap />
              <ScrollEnd>
                <svg width="10" height="6" viewBox="0 0 10 6" fill="none" stroke="#555" strokeWidth="1.500"><path d="M1 1l4 4 4-4" /></svg>
              </ScrollEnd>
            </ScrollTrack>
          </TreeWrap>
        </LeftPanel>

        <RightPanel>
          <RightTabs>
            <RightTab $active>取证列表</RightTab>
            <RightTab>图库</RightTab>
          </RightTabs>
          <Breadcrumb>
            {crumbs.map((c, i) => (
              <React.Fragment key={c}>
                <Crumb $latin={i === 1 || i === 4}>{c}</Crumb>
                {i < crumbs.length - 1 && <CrumbArrow />}
              </React.Fragment>
            ))}
          </Breadcrumb>
          <ListActions>
            <ExportButton $w={88}>导出<Caret /></ExportButton>
            <ActionButton $w={88}>加入摘要</ActionButton>
            <ActionButton $w={120}>跳转到源文件</ActionButton>
            <ActionButton $w={120}>打开关联文件</ActionButton>
          </ListActions>
          <TableWrap>
            <TableMain>
              <HeadRow>
                {columns.map((c, i) => (
                  <HeadCell key={c}>
                    {c}
                    {i > 0 && i < 6 && <HeadFilter><Funnel /></HeadFilter>}
                  </HeadCell>
                ))}
              </HeadRow>
              {rows.map(r => {
                const sel = r[0] === 72;
                return (
                  <Row key={r[0]} $selected={sel}>
                    <IndexCell $selected={sel}><RowCheck />{r[0]}</IndexCell>
                    <NameCell $selected={sel}><FileIcon /><span>{mix(r[1])}</span></NameCell>
                    <Cell $selected={sel}>{r[2]}</Cell>
                    <Cell $selected={sel}>{r[3]}</Cell>
                    <Cell $selected={sel}>{r[4]}</Cell>
                    <Cell $selected={sel}>{r[5]}</Cell>
                    <Cell $selected={sel}><Han>正常</Han></Cell>
                  </Row>
                );
              })}
            </TableMain>
            <VScroll>
              <VEnd $h={24}>
                <svg width="12" height="6" viewBox="0 0 12 6"><path d="M0 6h12L6 0z" fill="#777" /></svg>
              </VEnd>
              <ScrollGap $h={311} />
              <VThumb>
                <svg width="15" height="7" viewBox="0 0 15 7" stroke="#2a5f9e"><path d="M0 .5h15M0 3.500h15M0 6.500h15" /></svg>
              </VThumb>
              <ScrollGap />
              <VEnd $h={21}>
                <svg width="12" height="6" viewBox="0 0 12 6"><path d="M0 0h12L6 6z" fill="#777" /></svg>
              </VEnd>
            </VScroll>
          </TableWrap>
          <HScroll>
            <HEnd>
              <svg width="6" height="12" viewBox="0 0 6 12"><path d="M6 0v12L0 6z" fill="#777" /></svg>
            </HEnd>
            <HThumb>
              <svg width="7" height="15" viewBox="0 0 7 15" stroke="#2a5f9e"><path d="M.5 0v15M3.500 0v15M6.500 0v15" /></svg>
            </HThumb>
            <ScrollGap />
            <HEnd>
              <svg width="6" height="12" viewBox="0 0 6 12"><path d="M0 0v12l6-6z" fill="#777" /></svg>
            </HEnd>
          </HScroll>
        </RightPanel>
      </Body>

      <Bottom>
        <BottomTabs>
          <BottomTab $active>摘要</BottomTab>
          <BottomTab>文本</BottomTab>
          <BottomTab>十六进制</BottomTab>
          <BottomTab>预览</BottomTab>
          <BottomTab>磁盘视图</BottomTab>
        </BottomTabs>
        <Summary>
          <SummaryLine><SumCjk>文件名称：</SumCjk><SumMono>2019-06-21 113537.jpg</SumMono></SummaryLine>
          <SummaryLine><SumCjk>文件大小（字节）：</SumCjk><SumMono>1349144</SumMono></SummaryLine>
          <SummaryLine><SumMono>md5</SumMono><SumCjk>值：</SumCjk><SumMono>7b8e1183d80962c0ad5a95ec673317a7</SumMono></SummaryLine>
          <SummaryLine><SumCjk>服务器时间：</SumCjk><SumMono>2019-10-30 21:01:50</SumMono></SummaryLine>
          <SummaryLine><SumCjk>本地缓存时间：</SumCjk><SumMono>2019-06-21 11:35:37</SumMono></SummaryLine>
          <SummaryLine><SumCjk>删除状态：正常</SumCjk></SummaryLine>
        </Summary>
      </Bottom>
    </Page>
  );
}
